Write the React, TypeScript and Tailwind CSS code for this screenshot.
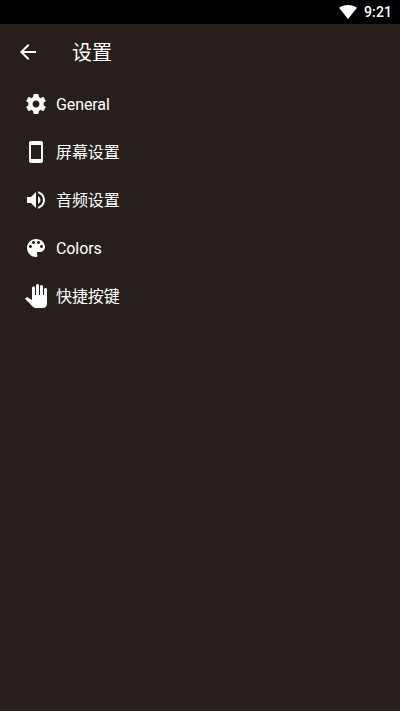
import { MdArrowBack, MdStayCurrentPortrait, MdVolumeUp, MdPanTool } from "react-icons/md";

function GearIcon({ size }: { size: number }) {
  return (
    <svg width={size} height={size} viewBox="0 0 24 24" fill="currentColor">
      <path d="M19.43 12.98c.04-.32.07-.64.07-.98s-.03-.66-.07-.98l2.11-1.65c.19-.15.24-.42.12-.64l-2-3.46c-.12-.22-.39-.3-.61-.22l-2.49 1c-.52-.4-1.08-.73-1.69-.98l-.38-2.65C14.46 2.18 14.25 2 14 2h-4c-.25 0-.46.18-.49.42l-.38 2.65c-.61.25-1.17.59-1.69.98l-2.49-1c-.23-.09-.49 0-.61.22l-2 3.46c-.13.22-.07.49.12.64l2.11 1.65c-.04.32-.07.65-.07.98s.03.66.07.98l-2.11 1.65c-.19.15-.24.42-.12.64l2 3.46c.12.22.39.3.61.22l2.49-1c.52.4 1.08.73 1.69.98l.38 2.65c.03.24.24.42.49.42h4c.25 0 .46-.18.49-.42l.38-2.65c.61-.25 1.17-.59 1.69-.98l2.49 1c.23.09.49 0 .61-.22l2-3.46c.12-.22.07-.49-.12-.64l-2.11-1.65zM12 15.5c-1.93 0-3.5-1.57-3.5-3.5s1.57-3.5 3.5-3.5 3.5 1.57 3.5 3.5-1.57 3.5-3.5 3.5z" />
    </svg>
  );
}

function PaletteIcon({ size }: { size: number }) {
  return (
    <svg width={size} height={size} viewBox="0 0 24 24" fill="currentColor">
      <path d="M12 3c-4.97 0-9 4.03-9 9s4.03 9 9 9c.83 0 1.5-.67 1.5-1.5 0-.39-.15-.74-.39-1.01-.23-.26-.38-.61-.38-.99 0-.83.67-1.5 1.5-1.5H16c2.76 0 5-2.24 5-5 0-4.42-4.03-8-9-8zm-5.5 9c-.83 0-1.5-.67-1.5-1.5S5.67 9 6.5 9 8 9.67 8 10.5 7.33 12 6.5 12zm3-4C8.67 8 8 7.33 8 6.5S8.67 5 9.5 5s1.5.67 1.5 1.5S10.33 8 9.5 8zm5 0c-.83 0-1.5-.67-1.5-1.5S13.67 5 14.5 5s1.5.67 1.5 1.5S15.33 8 14.5 8zm3 4c-.83 0-1.5-.67-1.5-1.5S16.67 9 17.5 9s1.5.67 1.5 1.5-.67 1.5-1.5 1.5z" />
    </svg>
  );
}

const items = [
  { label: "General", icon: GearIcon },
  { label: "屏幕设置", icon: MdStayCurrentPortrait },
  { label: "音频设置", icon: MdVolumeUp },
  { label: "Colors", icon: PaletteIcon },
  { label: "快捷按键", icon: MdPanTool },
];

export default function App() {
  return (
    <div className="flex h-screen flex-col bg-[#281f1d] font-[Roboto,'Noto_Sans_CJK_SC',sans-serif] text-white">
      {/* Status bar */}
      <div className="flex h-6 shrink-0 items-center justify-end gap-[7px] bg-black pr-2">
        <svg width="18" height="14" viewBox="0 0 18 14" fill="currentColor">
          <path d="M9 14 0 2.8C2.6 1 5.6 0 9 0s6.4 1 9 2.8z" />
        </svg>
        <span className="text-sm font-medium tracking-[0.1px]">9:21</span>
      </div>

      {/* App bar */}
      <header className="flex h-14 shrink-0 items-center gap-8 px-4">
        <button aria-label="Back">
          <MdArrowBack size={24} />
        </button>
        <h1 className="pt-0.5 text-xl">设置</h1>
      </header>

      <nav>
        {items.map(({ label, icon: Icon }) => (
          <button key={label} className="flex h-12 w-full items-center gap-2 px-6 text-left">
            <Icon size={24} />
            <span className="pt-0.5 text-base tracking-[-0.1px]">{label}</span>
          </button>
        ))}
      </nav>
    </div>
  );
}
